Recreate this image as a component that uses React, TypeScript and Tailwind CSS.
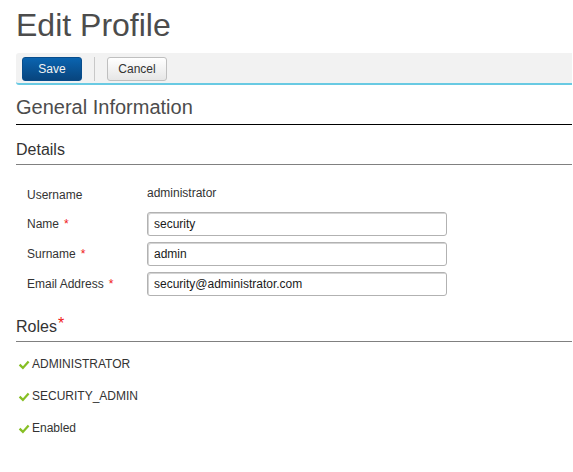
import type { ReactNode } from "react";

const fields = [
  { id: "name", label: "Name", value: "security", type: "text" },
  { id: "surname", label: "Surname", value: "admin", type: "text" },
  { id: "email", label: "Email Address", value: "security@administrator.com", type: "email" },
];

const roles = ["ADMINISTRATOR", "SECURITY_ADMIN", "Enabled"];

function SectionTitle({ children }: { children: ReactNode }) {
  return (
    <h3 className="border-b border-[#808080] pb-px text-base leading-[26px] text-[#333333]">
      {children}
    </h3>
  );
}

function CheckMark() {
  return (
    <svg className="mt-[2px] h-3 w-3 shrink-0" viewBox="0 0 12 12" fill="none" aria-hidden="true">
      <path d="M1.6 5.6 4.9 8.9 10.6 2.6" stroke="#86bf24" strokeWidth="2.3" />
    </svg>
  );
}

export default function App() {
  return (
    <main className="bg-white pt-[5px] pr-px pb-6 pl-4 font-['Liberation_Sans',Arial,sans-serif] text-xs text-[#333333]">
      <h1 className="text-[32px] leading-10 text-[#4c4c4c]">Edit Profile</h1>

      <div className="mt-2 flex h-8 items-center rounded-l-[3px] border-b-2 border-[#69cae3] bg-[#f2f2f2] px-[6px] pt-[2px]">
        <button
          type="button"
          className="h-6 w-[60px] rounded-[3px] border border-[#084d8c] bg-linear-to-b from-[#0a64b0] to-[#08457e] text-[#f2f2f2]"
        >
          Save
        </button>
        <div className="ml-3 h-6 w-px bg-[#c8c8c8]" />
        <button
          type="button"
          className="ml-3 h-6 w-[60px] rounded-[3px] border border-[#bfbfbf] bg-linear-to-b from-white to-[#e6e6e6] text-[#333333]"
        >
          Cancel
        </button>
      </div>

      <h2 className="mt-2 border-b border-black pb-[3px] text-xl leading-7 text-[#4c4c4c]">
        General Information
      </h2>

      <section className="mt-3">
        <SectionTitle>Details</SectionTitle>
        <form className="flex flex-col gap-[6px] pt-[17px] pl-[11px]">
          <div className="flex h-6 items-start">
            <span className="w-[120px] leading-[26px]">Username</span>
            <span className="leading-[22px]">administrator</span>
          </div>
          {fields.map((field) => (
            <div key={field.id} className="flex h-6 items-center">
              <label htmlFor={field.id} className="w-[120px] leading-6">
                {field.label}
                <span className="ml-[5px] text-[#f01818]">*</span>
              </label>
              <input
                id={field.id}
                type={field.type}
                required
                defaultValue={field.value}
                className="h-6 w-[300px] rounded-[3px] border border-[#b2b2b2] bg-white px-[6px] text-[#1a1a1a] shadow-[inset_1px_1px_0_#d4d4d4] outline-none"
              />
            </div>
          ))}
        </form>
      </section>

      <section className="mt-[18px]">
        <SectionTitle>
          Roles<span className="relative -top-[3px] ml-px text-[#f01818]">*</span>
        </SectionTitle>
        <ul className="mt-[6px]">
          {roles.map((role) => (
            <li key={role} className="flex items-center gap-[2px] pl-[2px] leading-8">
              <CheckMark />
              {role}
            </li>
          ))}
        </ul>
      </section>
    </main>
  );
}
